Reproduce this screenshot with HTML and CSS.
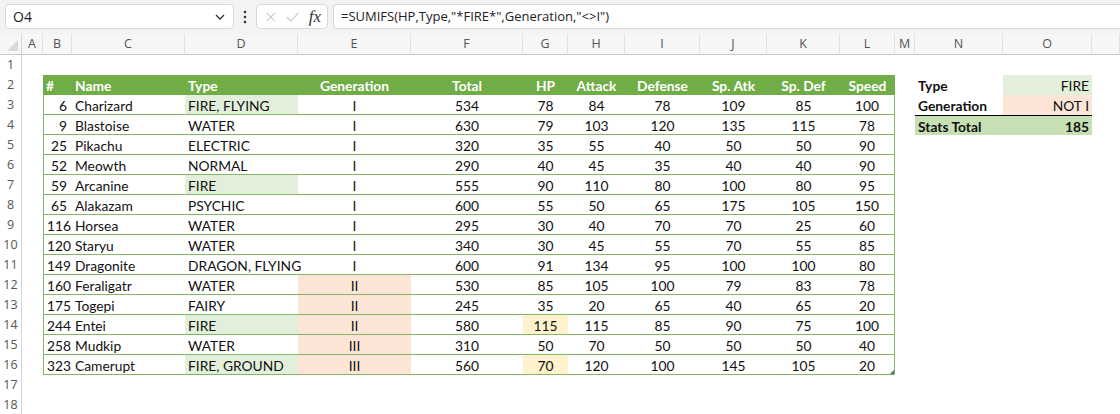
FILE: index.html
```html
<!DOCTYPE html>
<html lang="en">
<head>
    <meta charset="UTF-8">
    <title>SUMIFS with wildcards</title>
    <link rel="stylesheet" href="styles.css">
</head>
<body>
    <div class="topbar">
        <div class="name-box">
            <span>O4</span>
            <svg class="chevron" width="10" height="6" viewBox="0 0 10 6"><path d="M1 1 L5 5 L9 1" fill="none" stroke="#333" stroke-width="1.3"/></svg>
        </div>
        <div class="dots">
            <svg width="4" height="14" viewBox="0 0 4 14"><circle cx="2" cy="2" r="1.3" fill="#333"/><circle cx="2" cy="7" r="1.3" fill="#333"/><circle cx="2" cy="12" r="1.3" fill="#333"/></svg>
        </div>
        <div class="fx-box">
            <svg width="14" height="14" viewBox="0 0 14 14"><path d="M2 2 L12 12 M12 2 L2 12" stroke="#c8c8c8" stroke-width="1.3"/></svg>
            <svg width="16" height="14" viewBox="0 0 16 14"><path d="M1 7 L6 12 L15 2" fill="none" stroke="#c8c8c8" stroke-width="1.3"/></svg>
            <span class="fx">fx</span>
        </div>
        <div class="formula">=SUMIFS(HP,Type,"*FIRE*",Generation,"&lt;&gt;I")</div>
    </div>

    <table class="sheet">
        <colgroup>
            <col style="width:22px"><col style="width:21px"><col style="width:29px"><col style="width:113px"><col style="width:113px"><col style="width:113px"><col style="width:112px"><col style="width:45px"><col style="width:57px"><col style="width:75px"><col style="width:67px"><col style="width:73px"><col style="width:55px"><col style="width:20px"><col style="width:88px"><col style="width:89px"><col style="width:28px">
        </colgroup>
        <thead>
            <tr class="col-heads">
                <th class="corner"><span class="tri"></span></th>
                <th>A</th><th>B</th><th>C</th><th>D</th><th>E</th><th>F</th><th>G</th><th>H</th><th>I</th><th>J</th><th>K</th><th>L</th><th>M</th><th>N</th><th>O</th><th></th>
            </tr>
        </thead>
        <tbody>
            <tr><th>1</th><td></td><td></td><td></td><td></td><td></td><td></td><td></td><td></td><td></td><td></td><td></td><td></td><td></td><td></td><td></td><td></td></tr>
            <tr class="head">
                <th>2</th><td></td>
                <td class="l">#</td><td class="l">Name</td><td class="l">Type</td><td>Generation</td><td>Total</td><td>HP</td><td>Attack</td><td>Defense</td><td>Sp. Atk</td><td>Sp. Def</td><td>Speed</td>
                <td></td><td class="lbl">Type</td><td class="val fire">FIRE</td><td></td>
            </tr>
            <tr class="data">
                <th>3</th><td></td>
                <td class="r">6</td><td class="l">Charizard</td><td class="l fire">FIRE, FLYING</td><td>I</td><td>534</td><td>78</td><td>84</td><td>78</td><td>109</td><td>85</td><td>100</td>
                <td></td><td class="lbl">Generation</td><td class="val gen">NOT I</td><td></td>
            </tr>
            <tr class="data">
                <th>4</th><td></td>
                <td class="r">9</td><td class="l">Blastoise</td><td class="l">WATER</td><td>I</td><td>630</td><td>79</td><td>103</td><td>120</td><td>135</td><td>115</td><td>78</td>
                <td></td><td class="lbl total">Stats Total</td><td class="val total">185</td><td></td>
            </tr>
            <tr class="data">
                <th>5</th><td></td>
                <td class="r">25</td><td class="l">Pikachu</td><td class="l">ELECTRIC</td><td>I</td><td>320</td><td>35</td><td>55</td><td>40</td><td>50</td><td>50</td><td>90</td>
                <td></td><td></td><td></td><td></td>
            </tr>
            <tr class="data">
                <th>6</th><td></td>
                <td class="r">52</td><td class="l">Meowth</td><td class="l">NORMAL</td><td>I</td><td>290</td><td>40</td><td>45</td><td>35</td><td>40</td><td>40</td><td>90</td>
                <td></td><td></td><td></td><td></td>
            </tr>
            <tr class="data">
                <th>7</th><td></td>
                <td class="r">59</td><td class="l">Arcanine</td><td class="l fire">FIRE</td><td>I</td><td>555</td><td>90</td><td>110</td><td>80</td><td>100</td><td>80</td><td>95</td>
                <td></td><td></td><td></td><td></td>
            </tr>
            <tr class="data">
                <th>8</th><td></td>
                <td class="r">65</td><td class="l">Alakazam</td><td class="l">PSYCHIC</td><td>I</td><td>600</td><td>55</td><td>50</td><td>65</td><td>175</td><td>105</td><td>150</td>
                <td></td><td></td><td></td><td></td>
            </tr>
            <tr class="data">
                <th>9</th><td></td>
                <td class="r">116</td><td class="l">Horsea</td><td class="l">WATER</td><td>I</td><td>295</td><td>30</td><td>40</td><td>70</td><td>70</td><td>25</td><td>60</td>
                <td></td><td></td><td></td><td></td>
            </tr>
            <tr class="data">
                <th>10</th><td></td>
                <td class="r">120</td><td class="l">Staryu</td><td class="l">WATER</td><td>I</td><td>340</td><td>30</td><td>45</td><td>55</td><td>70</td><td>55</td><td>85</td>
                <td></td><td></td><td></td><td></td>
            </tr>
            <tr class="data">
                <th>11</th><td></td>
                <td class="r">149</td><td class="l">Dragonite</td><td class="l">DRAGON, FLYING</td><td>I</td><td>600</td><td>91</td><td>134</td><td>95</td><td>100</td><td>100</td><td>80</td>
                <td></td><td></td><td></td><td></td>
            </tr>
            <tr class="data">
                <th>12</th><td></td>
                <td class="r">160</td><td class="l">Feraligatr</td><td class="l">WATER</td><td class="gen">II</td><td>530</td><td>85</td><td>105</td><td>100</td><td>79</td><td>83</td><td>78</td>
                <td></td><td></td><td></td><td></td>
            </tr>
            <tr class="data">
                <th>13</th><td></td>
                <td class="r">175</td><td class="l">Togepi</td><td class="l">FAIRY</td><td class="gen">II</td><td>245</td><td>35</td><td>20</td><td>65</td><td>40</td><td>65</td><td>20</td>
                <td></td><td></td><td></td><td></td>
            </tr>
            <tr class="data">
                <th>14</th><td></td>
                <td class="r">244</td><td class="l">Entei</td><td class="l fire">FIRE</td><td class="gen">II</td><td>580</td><td class="hp">115</td><td>115</td><td>85</td><td>90</td><td>75</td><td>100</td>
                <td></td><td></td><td></td><td></td>
            </tr>
            <tr class="data">
                <th>15</th><td></td>
                <td class="r">258</td><td class="l">Mudkip</td><td class="l">WATER</td><td class="gen">III</td><td>310</td><td>50</td><td>70</td><td>50</td><td>50</td><td>50</td><td>40</td>
                <td></td><td></td><td></td><td></td>
            </tr>
            <tr class="data">
                <th>16</th><td></td>
                <td class="r">323</td><td class="l">Camerupt</td><td class="l fire">FIRE, GROUND</td><td class="gen">III</td><td>560</td><td class="hp">70</td><td>120</td><td>100</td><td>145</td><td>105</td><td class="last">20<span class="handle"></span></td>
                <td></td><td></td><td></td><td></td>
            </tr>
            <tr><th>17</th><td></td><td></td><td></td><td></td><td></td><td></td><td></td><td></td><td></td><td></td><td></td><td></td><td></td><td></td><td></td><td></td></tr>
            <tr><th>18</th><td></td><td></td><td></td><td></td><td></td><td></td><td></td><td></td><td></td><td></td><td></td><td></td><td></td><td></td><td></td><td></td></tr>
        </tbody>
    </table>
</body>
</html>
```

FILE: styles.css
```css
body {
    margin: 0;
    background: #fff;
    font-family: Lato, "Liberation Sans", sans-serif;
    overflow: hidden;
}
.topbar {
    display: flex;
    align-items: flex-start;
    height: 34px;
    padding: 4px 0 0 5px;
    box-sizing: border-box;
    background: #f3f3f3;
    font-family: "Open Sans", "Noto Sans", sans-serif;
    color: #222;
}
.name-box {
    display: flex;
    align-items: center;
    justify-content: space-between;
    width: 229px;
    height: 25px;
    padding: 0 8px 0 7px;
    box-sizing: border-box;
    background: #fff;
    border: 1px solid #d9d9d9;
    border-radius: 4px;
    font-size: 14px;
}
.dots {
    width: 22px;
    height: 25px;
    display: flex;
    align-items: center;
    justify-content: center;
}
.fx-box {
    display: flex;
    align-items: center;
    gap: 9px;
    width: 72px;
    height: 25px;
    padding: 0 6px 0 8px;
    box-sizing: border-box;
    background: #fff;
    border: 1px solid #d9d9d9;
    border-radius: 4px;
    margin-right: 5px;
}
.fx {
    font-family: "Liberation Serif", serif;
    font-style: italic;
    font-size: 17px;
    color: #333;
    margin-left: 1px;
}
.formula {
    flex: 1;
    height: 25px;
    line-height: 23px;
    padding-left: 7px;
    box-sizing: border-box;
    background: #fff;
    border: 1px solid #d9d9d9;
    border-right: none;
    border-radius: 4px 0 0 4px;
    font-size: 13px;
}
.sheet {
    table-layout: fixed;
    border-collapse: separate;
    border-spacing: 0;
    width: 1120px;
    font-size: 13.8px;
    color: #111;
}
.sheet td, .sheet th {
    padding: 2px 3px 0;
    height: 17px;
    line-height: 17px;
    border-bottom: 1px solid transparent;
    white-space: nowrap;
    text-align: center;
}
.sheet th {
    font-family: "Open Sans", "Noto Sans", sans-serif;
    font-weight: normal;
    font-size: 12.5px;
    color: #555;
    padding: 1px 0 0;
    height: 18px;
    line-height: 18px;
}
.sheet tbody th {
    border-right: 1px solid #d4d4d4;
    background: #fff;
}
.col-heads th {
    height: 20px;
    line-height: 20px;
    padding: 0;
    background: #f6f6f6;
    border-bottom: 1px solid #c8c8c8;
    border-right: 1px solid #e2e2e2;
}
.col-heads th.corner {
    position: relative;
    border-right: 1px solid #d4d4d4;
}
.tri {
    position: absolute;
    right: 3px;
    bottom: 3px;
    width: 0;
    height: 0;
    border-left: 11px solid transparent;
    border-bottom: 11px solid #d8d8d8;
}
.sheet td.l {
    text-align: left;
    padding-right: 0;
}
.sheet td.r {
    text-align: right;
    padding-right: 5px;
}

/* table header row */
.head td:nth-child(n+3):nth-child(-n+13) {
    background: #70ad47;
    color: #fff;
    font-weight: bold;
}

/* data rows */
.data td:nth-child(n+3):nth-child(-n+13) {
    border-bottom: 1px solid #84b562;
}
.data td:nth-child(3) {
    border-left: 1px solid #84b562;
}
.data td:nth-child(13) {
    border-right: 1px solid #84b562;
}
.data td.last {
    position: relative;
}
.handle {
    position: absolute;
    right: 0;
    bottom: 0;
    width: 0;
    height: 0;
    border-left: 4px solid transparent;
    border-bottom: 4px solid #4a6a8a;
}

/* conditional fills */
.sheet td.fire {
    background: #e2efda;
}
.sheet td.gen {
    background: #fce4d6;
}
.sheet td.hp {
    background: #fff2cc;
}

/* summary block */
.sheet td.lbl {
    font-weight: bold;
    text-align: left;
}
.sheet td.val {
    text-align: right;
}
.sheet td.total {
    background: #c6e0b4;
    font-weight: bold;
    border-top: 1px solid #000;
    border-bottom: none;
    padding-top: 1px;
}
```
